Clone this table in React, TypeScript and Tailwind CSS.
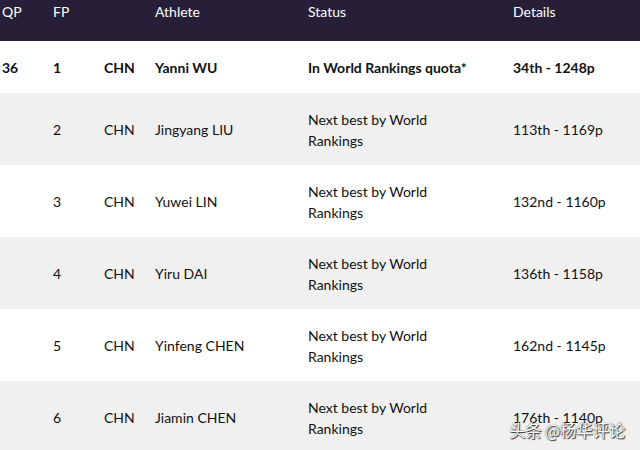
const rows = [
  { fp: "2", name: "Jingyang LIU", details: "113th - 1169p" },
  { fp: "3", name: "Yuwei LIN", details: "132nd - 1160p" },
  { fp: "4", name: "Yiru DAI", details: "136th - 1158p" },
  { fp: "5", name: "Yinfeng CHEN", details: "162nd - 1145p" },
  { fp: "6", name: "Jiamin CHEN", details: "176th - 1140p" },
];

const cols = "grid grid-cols-[51px_51px_51px_153px_205px_1fr] pl-[2px]";

export default function App() {
  return (
    <div className="relative w-[640px] h-[450px] overflow-hidden bg-white text-[14px] text-[#111] font-['Lato','Liberation_Sans',sans-serif]">
      <div className={`${cols} h-[41px] bg-[#271e37] text-white pt-[1px]`}>
        <div>QP</div>
        <div>FP</div>
        <div></div>
        <div>Athlete</div>
        <div>Status</div>
        <div>Details</div>
      </div>

      <div className={`${cols} h-[52px] items-center font-bold pt-[1px]`}>
        <div>36</div>
        <div>1</div>
        <div>CHN</div>
        <div>Yanni WU</div>
        <div>In World Rankings quota*</div>
        <div>34th - 1248p</div>
      </div>

      {rows.map((r, i) => (
        <div
          key={r.fp}
          className={`${cols} h-[72px] items-center leading-[21px] pt-[1px] ${i % 2 === 0 ? "bg-[#f0f0f0]" : "bg-white"}`}
        >
          <div></div>
          <div>{r.fp}</div>
          <div>CHN</div>
          <div>{r.name}</div>
          <div className="pr-[60px]">Next best by World Rankings</div>
          <div>{r.details}</div>
        </div>
      ))}

      {/* watermark */}
      <div className="absolute left-[509px] top-[418px] text-[16.5px] tracking-[-0.3px] text-white font-['Noto_Sans_CJK_SC',sans-serif] [text-shadow:0_0_1px_#222,1px_1px_1px_#333]">
        头条 @杨华评论
      </div>
    </div>
  );
}
